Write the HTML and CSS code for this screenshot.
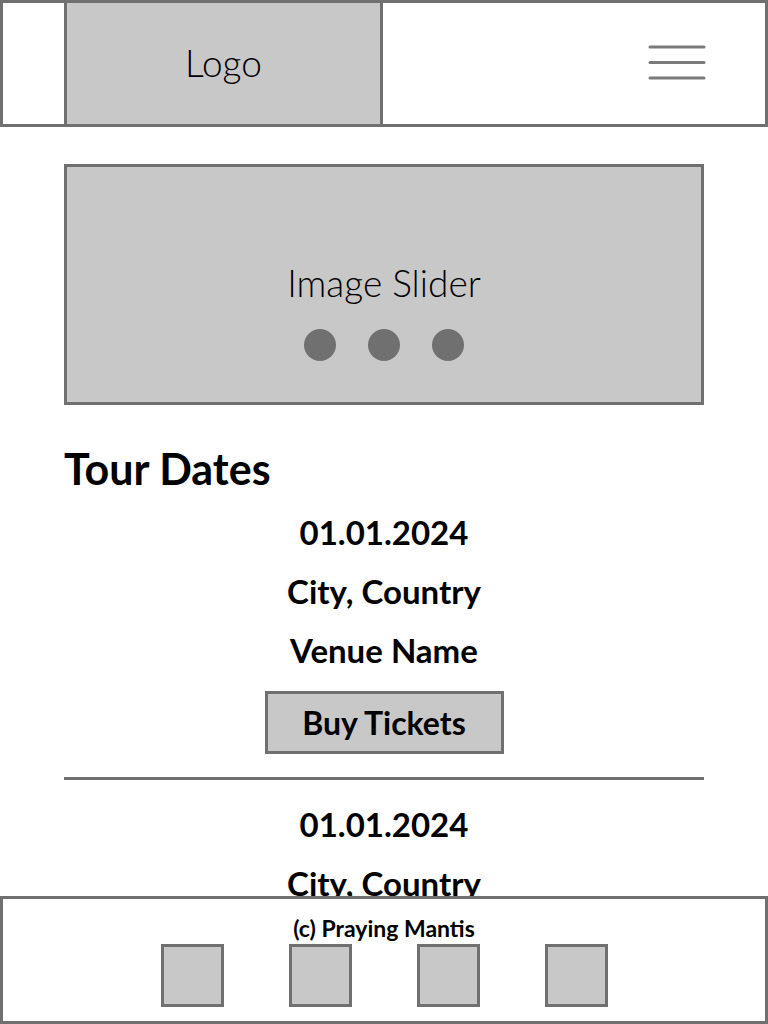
FILE: index.html
```html
<!DOCTYPE html>
<html lang="en">
<head>
<meta charset="utf-8">
<title>Praying Mantis</title>
<link rel="stylesheet" href="styles.css">
</head>
<body>
<header class="site-header">
  <div class="logo">Logo</div>
  <button class="menu" aria-label="Menu">
    <svg width="58" height="38" viewBox="0 0 58 38">
      <g stroke="#7a7a7a" stroke-width="3" stroke-linecap="round">
        <line x1="2" y1="3" x2="56" y2="3"/>
        <line x1="2" y1="18.5" x2="56" y2="18.5"/>
        <line x1="2" y1="34" x2="56" y2="34"/>
      </g>
    </svg>
  </button>
</header>

<main class="content">
  <section class="slider">
    <p class="slider-title">Image Slider</p>
    <div class="dots"><span class="dot"></span><span class="dot"></span><span class="dot"></span></div>
  </section>

  <h1 class="section-title">Tour Dates</h1>

  <ul class="tours">
    <li class="tour">
      <p class="tour-line">01.01.2024</p>
      <p class="tour-line">City, Country</p>
      <p class="tour-line">Venue Name</p>
      <button class="buy">Buy Tickets</button>
    </li>
    <li class="tour">
      <p class="tour-line">01.01.2024</p>
      <p class="tour-line">City, Country</p>
      <p class="tour-line">Venue Name</p>
      <button class="buy">Buy Tickets</button>
    </li>
  </ul>
</main>

<footer class="site-footer">
  <p class="copy">(c) Praying Mantis</p>
  <div class="socials">
    <span class="social"></span>
    <span class="social"></span>
    <span class="social"></span>
    <span class="social"></span>
  </div>
</footer>
</body>
</html>
```

FILE: styles.css
```css
* { box-sizing: border-box; }

html, body {
  margin: 0;
  padding: 0;
  background: #fff;
  color: #000;
  font-family: "Lato", "Noto Sans", sans-serif;
}

.site-header {
  height: 127px;
  border: 3px solid #707070;
  display: flex;
  align-items: center;
  padding-left: 61px;
  padding-right: 59px;
}

.logo {
  width: 319px;
  align-self: stretch;
  background: #c8c8c8;
  border-left: 3px solid #707070;
  border-right: 3px solid #707070;
  display: flex;
  align-items: center;
  justify-content: center;
  font-size: 37px;
  font-weight: 300;
  padding-bottom: 2px;
}

.menu {
  margin-left: auto;
  background: none;
  border: 0;
  padding: 0;
  display: block;
  line-height: 0;
  margin-top: -1px;
}

.content {
  padding: 37px 64px 160px;
}

.slider {
  height: 241px;
  border: 3px solid #707070;
  background: #c8c8c8;
  display: flex;
  flex-direction: column;
  align-items: center;
  padding-top: 94px;
}

.slider-title {
  margin: 0;
  font-size: 37px;
  font-weight: 300;
  line-height: 44px;
}

.dots {
  display: flex;
  gap: 32px;
  margin-top: 24px;
}

.dot {
  width: 32px;
  height: 32px;
  border-radius: 50%;
  background: #707070;
}

.section-title {
  margin: 40px 0 0;
  font-size: 43px;
  font-weight: 700;
  line-height: 48px;
}

.tours {
  list-style: none;
  margin: 10px 0 0;
  padding: 0;
}

.tour {
  display: flex;
  flex-direction: column;
  align-items: center;
  padding-bottom: 23px;
  border-bottom: 3px solid #707070;
  margin-bottom: 15px;
}

.tour-line {
  margin: 0;
  font-size: 33px;
  font-weight: 700;
  line-height: 59px;
}

.buy {
  margin-top: 11px;
  width: 239px;
  height: 63px;
  border: 3px solid #707070;
  background: #c8c8c8;
  font-family: inherit;
  font-size: 32px;
  font-weight: 700;
  color: #000;
  padding: 0;
}

.site-footer {
  position: fixed;
  left: 0;
  right: 0;
  bottom: 0;
  height: 128px;
  background: #fff;
  border: 3px solid #707070;
  display: flex;
  flex-direction: column;
  align-items: center;
}

.copy {
  margin: 16px 0 0;
  font-size: 23px;
  font-weight: 700;
  line-height: 26px;
}

.socials {
  display: flex;
  gap: 65px;
  margin-top: 3px;
}

.social {
  width: 63px;
  height: 63px;
  border: 3px solid #707070;
  background: #c8c8c8;
}
```
